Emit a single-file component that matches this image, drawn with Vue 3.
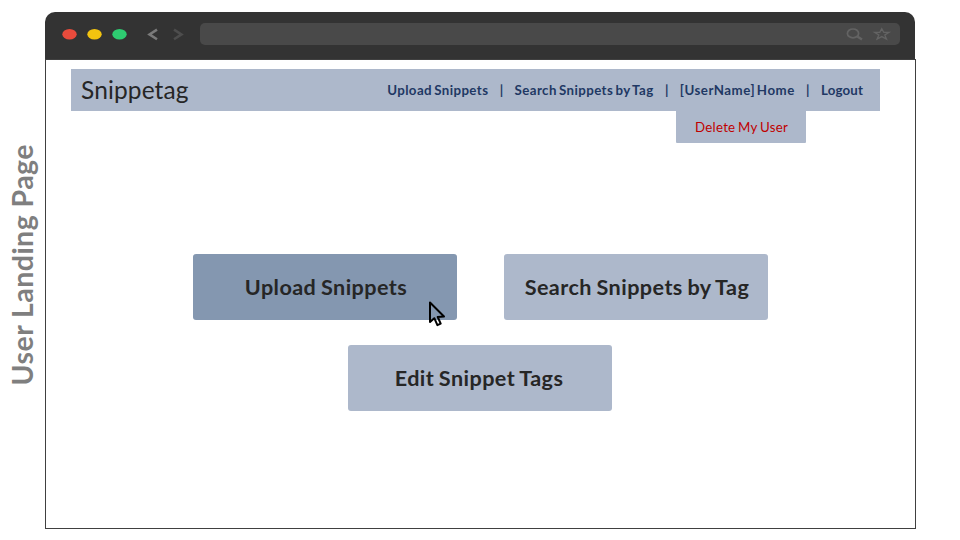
<script setup>
const links = [
  { id: 'upload', label: 'Upload Snippets' },
  { id: 'search', label: 'Search Snippets by Tag' },
  { id: 'home', label: '[UserName] Home' },
  { id: 'logout', label: 'Logout' },
]
</script>

<template>
  <div class="page">
    <aside class="side"><h1 class="side-title">User Landing Page</h1></aside>
    <div class="window">
      <header class="chrome">
        <svg class="controls" width="150" height="47" viewBox="0 0 150 47">
          <ellipse cx="24.5" cy="22.2" rx="7.2" ry="5.2" fill="#e94b3c" />
          <ellipse cx="49.5" cy="22.2" rx="7.2" ry="5.2" fill="#f3c40f" />
          <ellipse cx="74.5" cy="22.2" rx="7.2" ry="5.2" fill="#2ecc71" />
          <path d="M112 17.6 L104.5 22.4 L112 27.2" fill="none" stroke="#7a7a7a" stroke-width="2.5" />
          <path d="M129 17.6 L136.5 22.4 L129 27.2" fill="none" stroke="#4d4d4d" stroke-width="2.5" />
        </svg>
        <div class="address">
          <svg width="56" height="22" viewBox="-6 0 56 22">
            <g fill="none" stroke="#636363">
              <ellipse cx="3" cy="10.4" rx="5.6" ry="4.4" stroke-width="1.7" />
              <path d="M7 13.3 L12 16.5" stroke-width="2.4" />
              <path d="M31.8 5.7 L33.8 9.3 H39 L34.8 12 L36.5 16 L31.8 13.6 L27.1 16 L28.8 12 L24.6 9.3 H29.8 Z" stroke-width="1.3" />
            </g>
          </svg>
        </div>
      </header>
      <main class="view">
        <nav class="nav">
          <span class="brand">Snippetag</span>
          <div class="links">
            <template v-for="(link, i) in links" :key="link.id">
              <span v-if="i" class="sep">|</span>
              <a :class="['link', link.id]">{{ link.label }}</a>
            </template>
          </div>
          <div class="menu"><a class="delete">Delete My User</a></div>
        </nav>
        <section class="actions">
          <button class="action active">
            <span>Upload Snippets</span>
            <svg class="cursor" width="20" height="28" viewBox="0 0 20 28">
              <path d="M3 2.5 V22 L7.3 18.2 L10.4 25.2 L13.7 23.7 L10.7 17 L17 16.5 Z" fill="none" stroke="#000" stroke-width="2" stroke-linejoin="round" />
            </svg>
          </button>
          <button class="action"><span>Search Snippets by Tag</span></button>
          <button class="action last"><span>Edit Snippet Tags</span></button>
        </section>
      </main>
    </div>
  </div>
</template>

<style>
body { background: #fff; }
</style>

<style scoped>
.page { width: 960px; height: 540px; display: flex; box-sizing: border-box; padding: 12px 0 11px; overflow: hidden; font-family: Lato, "Open Sans", sans-serif; }
.side { box-sizing: border-box; width: 45px; padding: 0 2px 12px 0; display: flex; align-items: center; justify-content: center; }
.side-title { margin: 0; writing-mode: vertical-rl; transform: rotate(180deg); font-size: 28.5px; line-height: 34px; font-weight: 700; letter-spacing: 0.45px; color: #7f7f7f; white-space: nowrap; }
.window { width: 871px; display: flex; flex-direction: column; }
.chrome { width: 870px; height: 47px; display: flex; background: #333; border-radius: 10px 10px 0 0; }
.controls { display: block; }
.address { width: 700px; height: 22px; margin: 11px 0 0 5px; border-radius: 5px; background: #494949; display: flex; justify-content: flex-end; }
.view { box-sizing: border-box; flex: 1; border: 1px solid #404040; padding: 9px 35px 0 25px; }
.nav { position: relative; box-sizing: border-box; height: 42px; padding: 0 17px 0 10px; display: flex; align-items: center; justify-content: space-between; background: #adb8cb; }
.brand { font-size: 24.5px; line-height: 30px; letter-spacing: 0.12px; color: #262626; }
.links { display: flex; align-items: center; }
.link { font-size: 13.3px; line-height: 20px; font-weight: 700; letter-spacing: 0.4px; word-spacing: -1.4px; color: #1f3864; white-space: nowrap; }
.home { letter-spacing: 0.5px; word-spacing: -2px; }
.logout { letter-spacing: 0.15px; }
.sep { width: 26.2px; font-size: 13.3px; line-height: 20px; font-weight: 700; color: #1f3864; text-align: center; }
.menu { position: absolute; left: 605px; top: 42px; width: 130px; height: 32px; display: flex; align-items: center; justify-content: center; background: #adb8cb; border-radius: 0 0 1px 1px; }
.delete { padding-left: 1px; font-size: 13.3px; letter-spacing: 0.25px; word-spacing: -1px; color: #c00000; white-space: nowrap; }
.actions { display: flex; flex-wrap: wrap; justify-content: center; gap: 25px 47px; padding: 143px 0 0 10px; }
.action { width: 264px; height: 66px; padding: 0 0 0 2px; border: 0; border-radius: 3px; background: #adb8cb; color: #262626; font: 700 21.6px/30px Lato, "Open Sans", sans-serif; letter-spacing: 0.43px; word-spacing: -1px; white-space: nowrap; }
.active { position: relative; background: #8497b0; }
.last { margin-right: 1px; padding: 0 2px 0 0; }
.cursor { position: absolute; left: 234px; top: 46px; }
</style>
